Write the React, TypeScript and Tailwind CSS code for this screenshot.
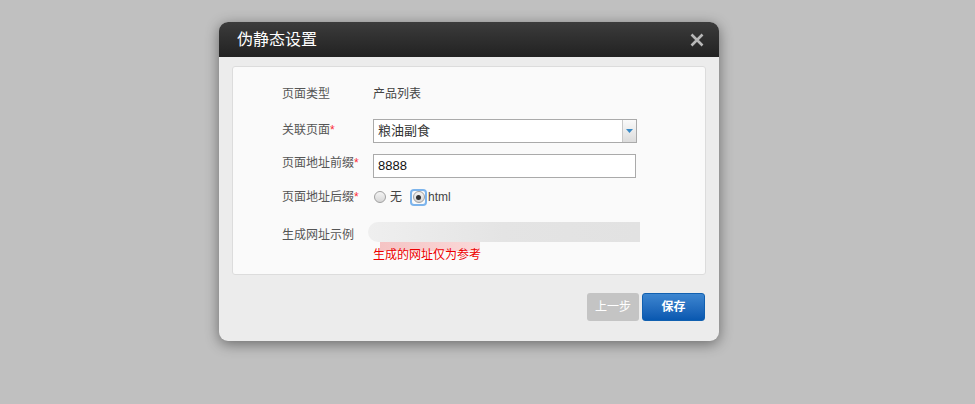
import React from "react";

const font = { fontFamily: '"Liberation Sans", "Noto Sans CJK SC", sans-serif' };

function Radio({ checked }: { checked?: boolean }) {
  return (
    <span
      className={`flex h-[13px] w-[13px] items-center justify-center rounded-[2px] ${
        checked ? "ring-2 ring-[#7cb4ec]" : ""
      }`}
    >
      <span className="flex h-[12px] w-[12px] items-center justify-center rounded-full border border-[#a0a0a0] bg-gradient-to-b from-[#f4f4f4] to-[#d6d6d6]">
        {checked && <span className="h-[5px] w-[5px] rounded-full bg-[#333]" />}
      </span>
    </span>
  );
}

export default function App() {
  return (
    <div className="h-[404px] w-[975px] overflow-hidden bg-[#c0c0c0] pl-[219px] pt-[22px]" style={font}>
      <div className="w-[500px] overflow-hidden rounded-[9px] bg-[#ececec] shadow-[0_3px_14px_rgba(0,0,0,0.45)]">
        {/* header */}
        <div className="flex h-[35px] items-center justify-between bg-gradient-to-b from-[#3c3c3c] to-[#222] pl-[18px] pr-[15px]">
          <span className="text-[16px] text-white">伪静态设置</span>
          <svg width="14" height="14" viewBox="0 0 14 14">
            <path d="M1.5 1.5 L12.5 12.5 M12.5 1.5 L1.5 12.5" stroke="#b8b8b8" strokeWidth="2.6" />
          </svg>
        </div>

        {/* body */}
        <div className="px-[13px] pt-[9px]">
          <div className="h-[209px] rounded-[3px] border border-[#dcdcdc] bg-[#fafafa] pl-[49px] pt-[17px] text-[12px] text-[#555]">
            <div className="flex h-[20px] items-center">
              <span className="w-[91px]">页面类型</span>
              <span className="text-[#444]">产品列表</span>
            </div>

            <div className="mt-[15px] flex items-start">
              <span className="w-[91px] pt-[3px] leading-[16px]">
                关联页面<span className="text-red-500">*</span>
              </span>
              <div className="flex h-[24px] w-[264px] items-center border border-[#aaa] bg-white">
                <span className="flex-1 pl-[4px] text-[13px] text-[#333]">粮油副食</span>
                <span className="flex h-full w-[14px] items-center justify-center border-l border-[#c8c8c8] bg-gradient-to-b from-[#fafafa] to-[#dcdcdc]">
                  <svg width="7" height="4" viewBox="0 0 7 4">
                    <path d="M0 0 H7 L3.5 4 Z" fill="#3a8ac6" />
                  </svg>
                </span>
              </div>
            </div>

            <div className="mt-[11px] flex items-start">
              <span className="w-[91px] pt-[1px] leading-[16px]">
                页面地址前缀<span className="text-red-500">*</span>
              </span>
              <div className="flex h-[24px] w-[263px] items-center border border-[#aaa] bg-white pl-[4px] text-[13px] text-[#111]">
                8888
              </div>
            </div>

            <div className="mt-[9px] flex h-[20px] items-center">
              <span className="w-[91px]">
                页面地址后缀<span className="text-red-500">*</span>
              </span>
              <Radio />
              <span className="ml-[4px] mr-[10px] text-[#444]">无</span>
              <Radio checked />
              <span className="ml-[3px] text-[#444]">html</span>
            </div>

            <div className="mt-[15px] flex items-start">
              <span className="w-[91px] pt-[4px]">生成网址示例</span>
              <div className="-ml-[5px] flex flex-col">
                <div className="h-[20px] w-[272px] rounded-l-[10px] bg-gradient-to-r from-[#efefef] via-[#e4e4e4] to-[#e2e2e2]" />
                <div className="ml-[12px] h-[9px] w-[100px] bg-gradient-to-r from-[#f5c4c4] to-[#fad8d8]" />
                <span className="-mt-[3px] ml-[5px] text-[12px] leading-[14px] text-[#e00]">生成的网址仅为参考</span>
              </div>
            </div>
          </div>

          {/* footer */}
          <div className="flex justify-end gap-[3px] pb-[20px] pr-px pt-[18px]">
            <button className="h-[28px] w-[52px] rounded-[3px] bg-[#c4c4c4] text-[12px] text-white">上一步</button>
            <button className="h-[28px] w-[63px] rounded-[3px] border border-[#1160b0] bg-gradient-to-b from-[#3d86d0] to-[#0858b0] text-[12px] font-bold text-white">
              保存
            </button>
          </div>
        </div>
      </div>
    </div>
  );
}
